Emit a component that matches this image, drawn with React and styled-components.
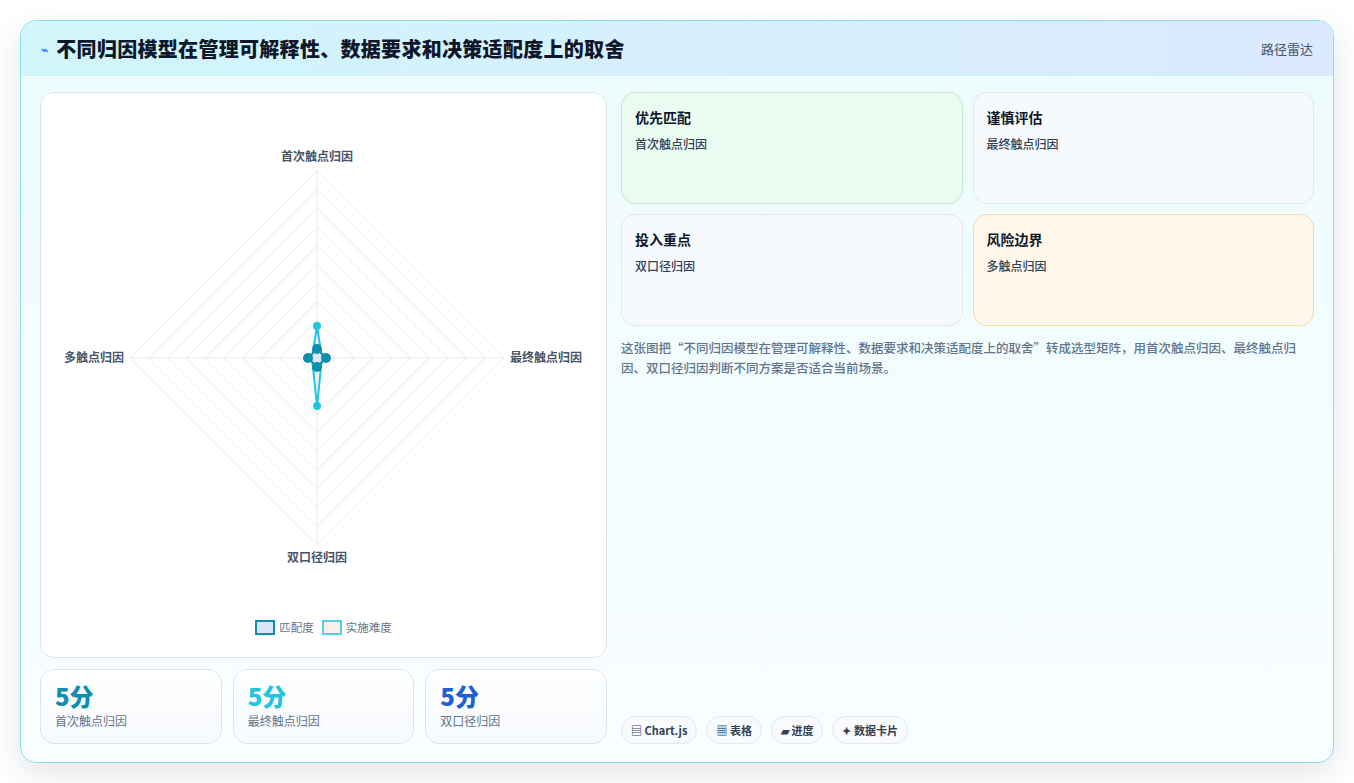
import React from "react";
import styled, { createGlobalStyle } from "styled-components";

const G = createGlobalStyle`
  body{margin:0;background:#fff;font-family:"Noto Sans CJK SC","Noto Sans",sans-serif;}
`;
const Page = styled.div`padding:20px 20px 20px 20px;height:783px;box-sizing:border-box;`;
const Card = styled.div`
  height:743px;box-sizing:border-box;border:1px solid #8fdcec;border-radius:16px;overflow:hidden;
  background:linear-gradient(180deg,#ecfbfd,#f9feff);box-shadow:0 10px 30px rgba(15,40,60,.12);
  display:flex;flex-direction:column;`;
const Header = styled.div`
  height:55px;display:flex;align-items:center;justify-content:space-between;padding:0 20px 0 20px;
  background:linear-gradient(90deg,#d0f6fb,#dbe9fd);border-bottom:1px solid #cdeef5;box-sizing:border-box;`;
const Title = styled.h1`margin:0;font-size:20px;font-weight:800;color:#0f172a;display:flex;align-items:center;gap:8px;letter-spacing:0.3px;`;
const Tag = styled.span`font-size:13px;color:#475569;`;
const Body = styled.div`flex:1;display:grid;grid-template-columns:567px 1fr;gap:14px;padding:16px 19px 18px 19px;`;
const Left = styled.div`display:flex;flex-direction:column;gap:11px;`;
const ChartBox = styled.div`height:566px;box-sizing:border-box;border:1px solid #dbe7f0;border-radius:14px;background:#fff;position:relative;`;
const Stats = styled.div`display:grid;grid-template-columns:repeat(3,1fr);gap:11px;`;
const Stat = styled.div`height:75px;box-sizing:border-box;border:1px solid #d8e6f3;border-radius:14px;background:linear-gradient(180deg,#fff,#f6f9fd);padding:10px 14px;`;
const Num = styled.div`font-size:24px;font-weight:800;color:${p=>p.c};line-height:32px;`;
const Lbl = styled.div`font-size:12px;color:#64748b;`;
const Right = styled.div`display:flex;flex-direction:column;`;
const Grid = styled.div`display:grid;grid-template-columns:1fr 1fr;gap:10px;`;
const Tile = styled.div`height:112px;box-sizing:border-box;border:1px solid ${p=>p.b};background:${p=>p.bg};border-radius:14px;padding:14px 13px;`;
const TT = styled.div`font-size:14px;font-weight:700;color:#0f172a;margin-bottom:8px;`;
const TS = styled.div`font-size:12px;color:#334155;font-weight:500;`;
const Desc = styled.p`margin:12px 0 0;font-size:12.5px;line-height:20px;color:#64748b;font-weight:500;`;
const Chips = styled.div`margin-top:auto;display:flex;gap:9px;`;
const Chip = styled.span`height:28px;box-sizing:border-box;padding:0 9px;border:1px solid #e2e8f0;border-radius:14px;background:#f8fafc;font-size:11px;font-weight:700;color:#334155;display:flex;align-items:center;gap:3px;`;
const Legend = styled.div`position:absolute;left:0;right:0;top:526px;display:flex;justify-content:center;gap:8px;font-size:11.5px;color:#64748b;`;
const Key = styled.span`display:flex;align-items:center;gap:4px;`;
const Sw = styled.span`width:16px;height:11px;border:2.5px solid ${p=>p.c};background:${p=>p.bg};`;

const cx=276, cy=265, R=187;
function Radar(){
  const rings=[];
  for(let i=1;i<=10;i++){const r=R*i/10;rings.push(<polygon key={i} points={`${cx},${cy-r} ${cx+r},${cy} ${cx},${cy+r} ${cx-r},${cy}`} fill="none" stroke="#e7eaee" strokeWidth="1"/>);}
  const lab={fontSize:12,fontWeight:700,fill:"#475569",fontFamily:"Noto Sans CJK SC"};
  return (
    <svg width="565" height="520" style={{display:"block"}}>
      {rings}
      <line x1={cx} y1={cy-R} x2={cx} y2={cy+R} stroke="#e7eaee"/>
      <line x1={cx-R} y1={cy} x2={cx+R} y2={cy} stroke="#e7eaee"/>
      <text x={cx} y={68} textAnchor="middle" style={lab}>首次触点归因</text>
      <text x={cx+193} y={cy+4} style={lab}>最终触点归因</text>
      <text x={cx} y={469} textAnchor="middle" style={lab}>双口径归因</text>
      <text x={cx-193} y={cy+4} textAnchor="end" style={lab}>多触点归因</text>
      <polygon points={`${cx},${cy-32} ${cx+5},${cy} ${cx},${cy+48} ${cx-5},${cy}`} fill="rgba(251,230,215,.5)" stroke="#22c5e0" strokeWidth="2"/>
      <polygon points={`${cx},${cy-9} ${cx+9},${cy} ${cx},${cy+9} ${cx-9},${cy}`} fill="rgba(220,225,245,.8)" stroke="#0e8fb0" strokeWidth="2"/>
      {[[0,-32],[0,48]].map(([a,b],i)=><circle key={i} cx={cx+a} cy={cy+b} r="4" fill="#22c5e0"/>)}
      {[[0,-9],[9,0],[0,9],[-9,0]].map(([a,b],i)=><circle key={i} cx={cx+a} cy={cy+b} r="5" fill="#0e8fb0"/>)}
    </svg>
  );
}

export default function App(){
  return (<Page><G/><Card>
    <Header>
      <Title><span style={{fontSize:12,color:"#3b82f6"}}>⌁</span>不同归因模型在管理可解释性、数据要求和决策适配度上的取舍</Title>
      <Tag>路径雷达</Tag>
    </Header>
    <Body>
      <Left>
        <ChartBox>
          <Radar/>
          <Legend>
            <Key><Sw c="#0e8fb0" bg="#dbe5fb"/>匹配度</Key>
            <Key><Sw c="#4fd3e8" bg="#fdf0e7"/>实施难度</Key>
          </Legend>
        </ChartBox>
        <Stats>
          <Stat><Num c="#0e8fb0">5分</Num><Lbl>首次触点归因</Lbl></Stat>
          <Stat><Num c="#22c5e0">5分</Num><Lbl>最终触点归因</Lbl></Stat>
          <Stat><Num c="#1d5fd6">5分</Num><Lbl>双口径归因</Lbl></Stat>
        </Stats>
      </Left>
      <Right>
        <Grid>
          <Tile b="#bfeccf" bg="#eafcf2"><TT>优先匹配</TT><TS>首次触点归因</TS></Tile>
          <Tile b="#dfe7f0" bg="#f7fafc"><TT>谨慎评估</TT><TS>最终触点归因</TS></Tile>
          <Tile b="#dfe7f0" bg="#f7fafc"><TT>投入重点</TT><TS>双口径归因</TS></Tile>
          <Tile b="#f3d9a8" bg="#fff7ea"><TT>风险边界</TT><TS>多触点归因</TS></Tile>
        </Grid>
        <Desc>这张图把“不同归因模型在管理可解释性、数据要求和决策适配度上的取舍”转成选型矩阵，用首次触点归因、最终触点归因、双口径归因判断不同方案是否适合当前场景。</Desc>
        <Chips>
          <Chip>▤ Chart.js</Chip><Chip>▦ 表格</Chip><Chip>▰ 进度</Chip><Chip>✦ 数据卡片</Chip>
        </Chips>
      </Right>
    </Body>
  </Card></Page>);
}
